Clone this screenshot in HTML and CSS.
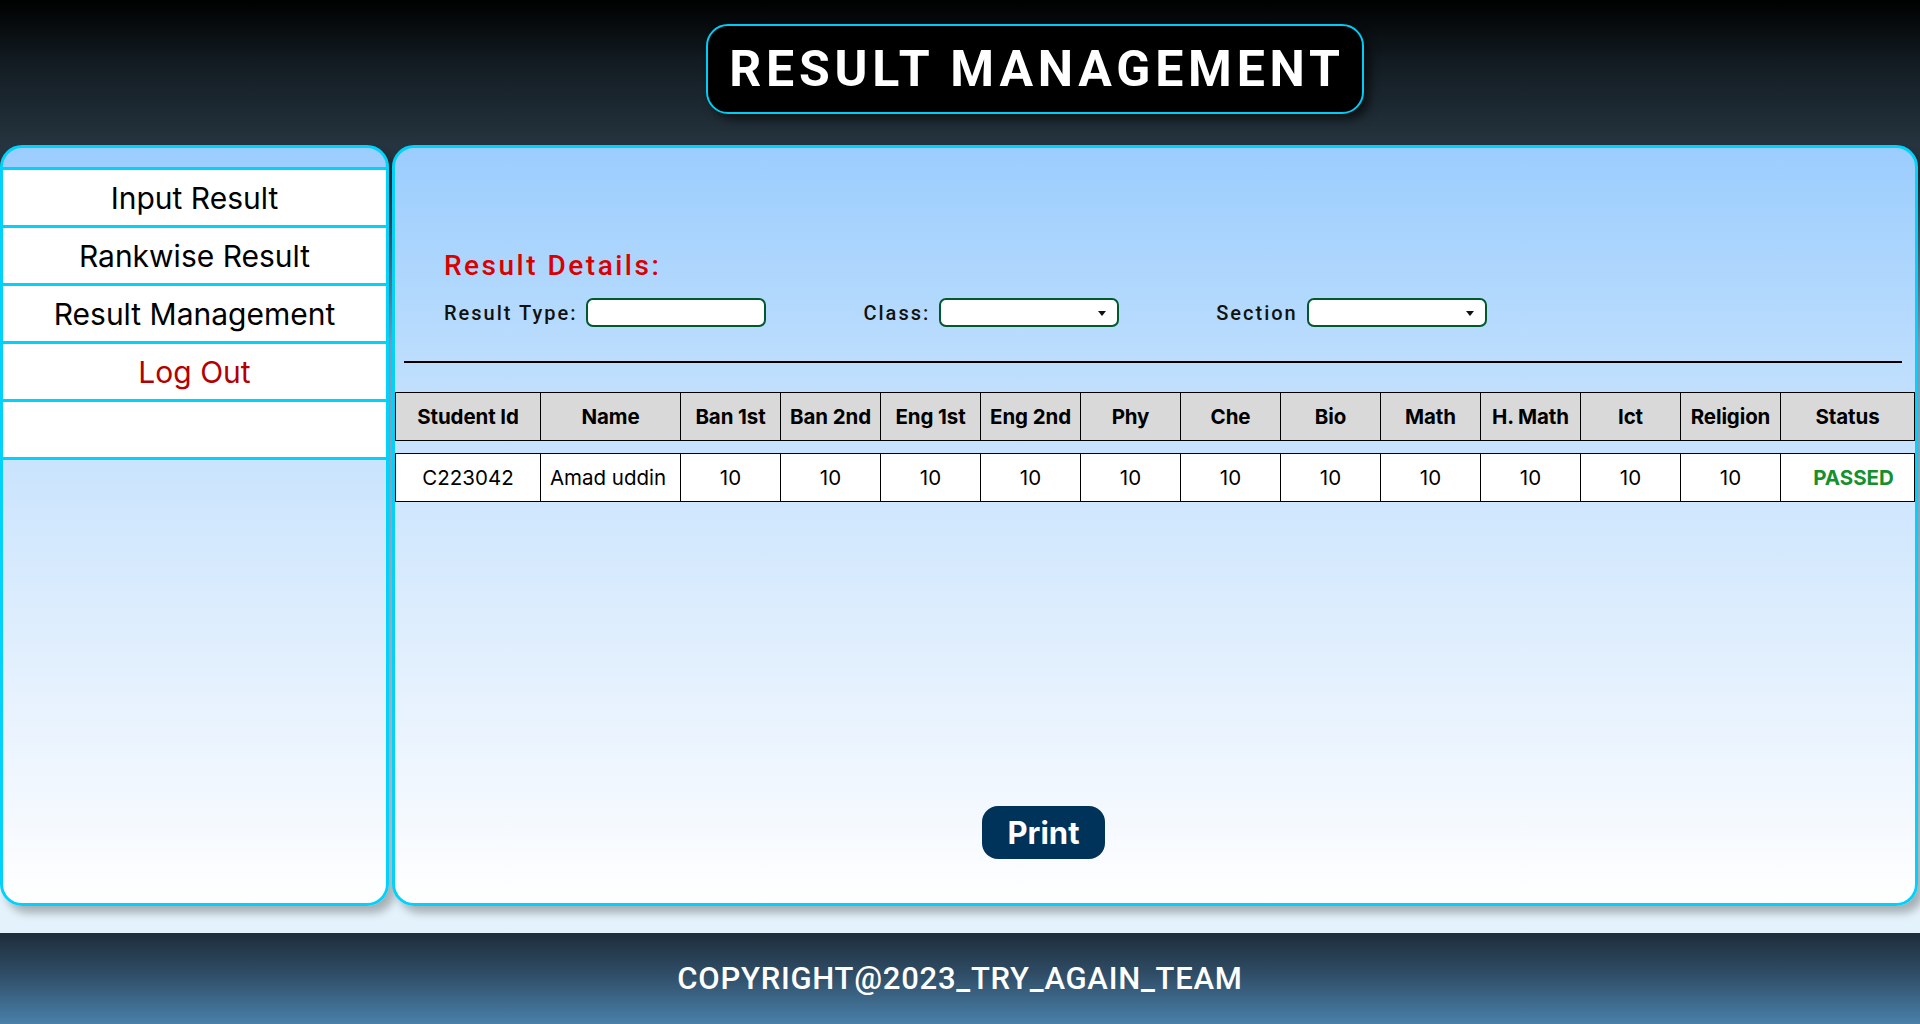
FILE: index.html
```html
<!DOCTYPE html>
<html lang="en">
<head>
<meta charset="utf-8">
<title>Result Management</title>
<link rel="stylesheet" href="styles.css">
</head>
<body>
<div class="page">
  <header class="top">
    <h1 class="title">RESULT MANAGEMENT</h1>
  </header>
  <main class="content">
    <aside class="sidebar">
      <ul class="menu">
        <li class="menu-item">Input Result</li>
        <li class="menu-item">Rankwise Result</li>
        <li class="menu-item">Result Management</li>
        <li class="menu-item logout">Log Out</li>
        <li class="menu-item"></li>
      </ul>
    </aside>
    <section class="panel">
      <div class="details">
        <h2 class="details-title">Result Details:</h2>
        <div class="filters">
          <label class="field"><span class="field-label">Result Type:</span><input class="box" type="text"></label>
          <label class="field"><span class="field-label">Class:</span><span class="select-wrap"><select class="box"><option></option></select></span></label>
          <label class="field"><span class="field-label">Section</span><span class="select-wrap"><select class="box"><option></option></select></span></label>
        </div>
      </div>
      <div class="rule"></div>
      <div class="table">
        <div class="row head">
          <div class="cell">Student Id</div>
          <div class="cell">Name</div>
          <div class="cell">Ban 1st</div>
          <div class="cell">Ban 2nd</div>
          <div class="cell">Eng 1st</div>
          <div class="cell">Eng 2nd</div>
          <div class="cell">Phy</div>
          <div class="cell">Che</div>
          <div class="cell">Bio</div>
          <div class="cell">Math</div>
          <div class="cell">H. Math</div>
          <div class="cell">Ict</div>
          <div class="cell">Religion</div>
          <div class="cell">Status</div>
        </div>
        <div class="row data">
          <div class="cell">C223042</div>
          <div class="cell name">Amad uddin</div>
          <div class="cell">10</div>
          <div class="cell">10</div>
          <div class="cell">10</div>
          <div class="cell">10</div>
          <div class="cell">10</div>
          <div class="cell">10</div>
          <div class="cell">10</div>
          <div class="cell">10</div>
          <div class="cell">10</div>
          <div class="cell">10</div>
          <div class="cell">10</div>
          <div class="cell passed">PASSED</div>
        </div>
      </div>
      <button class="print" type="button">Print</button>
    </section>
  </main>
  <footer class="footer">COPYRIGHT@2023_TRY_AGAIN_TEAM</footer>
</div>
</body>
</html>
```

FILE: styles.css
```css
* { box-sizing: border-box; }

html, body {
  margin: 0;
  padding: 0;
}

body {
  width: 1920px;
  height: 1024px;
  overflow: hidden;
  font-family: "Inter", "Noto Sans", sans-serif;
  background: #e4f2fb;
}

.page {
  display: flex;
  flex-direction: column;
  height: 1024px;
}

/* ---------- header ---------- */
.top {
  height: 145px;
  flex: none;
  background: linear-gradient(to bottom, #000000 0%, #111a20 40%, #25343f 100%);
  padding-top: 24px;
  padding-left: 706px;
}

.title {
  margin: 0;
  width: 658px;
  height: 90px;
  display: flex;
  align-items: center;
  justify-content: center;
  background: #000;
  border: 2px solid #00cdf5;
  border-radius: 22px;
  box-shadow: 6px 6px 10px rgba(0, 0, 0, 0.55);
  color: #fff;
  font-family: "Roboto", "Liberation Sans", sans-serif;
  font-weight: 700;
  font-size: 50px;
  letter-spacing: 4.8px;
  padding-left: 4px;
}

/* ---------- content ---------- */
.content {
  height: 788px;
  flex: none;
  display: flex;
  gap: 3px;
  align-items: flex-start;
  background: linear-gradient(to bottom, #25343f 0px, #25343f 30px, #9ccdf5 200px, #e4f2fb 700px, #e4f2fb 100%);
}

.sidebar,
.panel {
  height: 761px;
  border: 3px solid #00d2fb;
  border-radius: 22px;
  background: linear-gradient(to bottom, #9bcdfe 0%, #c4e1fd 35%, #f1f7fe 85%, #ffffff 100%);
  box-shadow: 6px 7px 8px rgba(0, 0, 0, 0.28);
}

.sidebar {
  width: 389px;
  flex: none;
  padding-top: 19px;
}

.menu {
  list-style: none;
  margin: 0;
  padding: 0;
  border-top: 3px solid #00d2fb;
}

.menu-item {
  height: 58px;
  background: #fff;
  border-bottom: 3px solid #00d2fb;
  display: flex;
  align-items: center;
  justify-content: center;
  font-family: "Inter", sans-serif;
  font-size: 30px;
  color: #000;
}

.menu-item.logout {
  color: #b30000;
}

.panel {
  width: 1526px;
  flex: none;
}

.details {
  padding: 101px 0 0 49px;
}

.details-title {
  margin: 0;
  font-family: "Roboto", "Liberation Sans", sans-serif;
  font-weight: 500;
  font-size: 28px;
  line-height: 33px;
  letter-spacing: 2.5px;
  color: #d90000;
}

.filters {
  display: flex;
  gap: 97px;
  margin-top: 16px;
  height: 29px;
}

.field {
  display: flex;
  align-items: center;
  gap: 9px;
}

.field-label {
  font-family: "Roboto", "Liberation Sans", sans-serif;
  font-weight: 500;
  font-size: 20px;
  letter-spacing: 2px;
  color: #111;
}

.box {
  width: 180px;
  height: 29px;
  margin: 0;
  border: 2px solid #005a2c;
  border-radius: 7px;
  background: #fff;
  appearance: none;
  -webkit-appearance: none;
  outline: none;
  font: inherit;
}

.select-wrap {
  position: relative;
  display: block;
  height: 29px;
}

.select-wrap::after {
  content: "";
  position: absolute;
  right: 13px;
  top: 13px;
  border-left: 4px solid transparent;
  border-right: 4px solid transparent;
  border-top: 5px solid #111;
  pointer-events: none;
}

.rule {
  height: 2px;
  background: #000;
  margin: 34px 13px 0 9px;
}

/* ---------- table ---------- */
.table {
  margin-top: 29px;
  display: flex;
  flex-direction: column;
  gap: 12px;
}

.row {
  display: grid;
  grid-template-columns: 145px 140px repeat(11, 100px) 1fr;
  border: 1px solid #000;
}

.row.head {
  height: 49px;
  background: #d9d9d9;
}

.row.data {
  height: 49px;
  background: #fff;
}

.cell {
  display: flex;
  align-items: center;
  justify-content: center;
  border-right: 1px solid #000;
  color: #000;
  white-space: nowrap;
}

.cell:last-child {
  border-right: none;
}

.head .cell {
  font-weight: 700;
  font-size: 20.5px;
  letter-spacing: -0.1px;
}

.data .cell {
  font-size: 20.5px;
}

.data .cell.name {
  padding-right: 5px;
}

.data .cell.passed {
  color: #14902d;
  font-weight: 700;
  font-size: 20.5px;
  padding-left: 12px;
}

.print {
  display: block;
  margin: 304px 0 0 587px;
  width: 123px;
  height: 53px;
  border: none;
  border-radius: 16px;
  background: #00335a;
  color: #fff;
  font-family: "Inter", sans-serif;
  font-weight: 700;
  font-size: 31px;
  padding: 0;
}

/* ---------- footer ---------- */
.footer {
  height: 91px;
  flex: none;
  display: flex;
  align-items: center;
  justify-content: center;
  background: linear-gradient(to bottom, #1e2d3b 0%, #2f4d66 45%, #4a80aa 100%);
  color: #fff;
  font-family: "Roboto", "Liberation Sans", sans-serif;
  font-weight: 500;
  font-size: 31px;
  letter-spacing: 0.75px;
}
```
